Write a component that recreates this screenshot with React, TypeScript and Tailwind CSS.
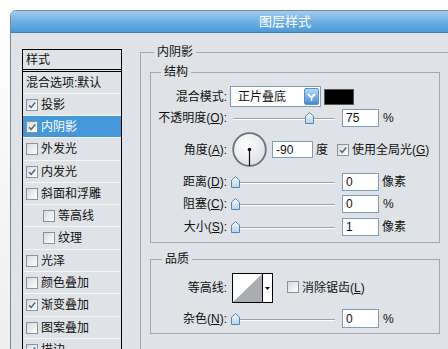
import React from 'react';

const styleItems = [
  { label: '投影', checked: true, h: 'h-[22px]' },
  { label: '内阴影', checked: true, active: true, h: 'h-[22px]' },
  { label: '外发光', checked: false, h: 'h-[23px]' },
  { label: '内发光', checked: true, h: 'h-[22px]' },
  { label: '斜面和浮雕', checked: false, h: 'h-[22px]' },
  { label: '等高线', checked: false, indent: true, h: 'h-[22px]' },
  { label: '纹理', checked: false, indent: true, h: 'h-[23px]' },
  { label: '光泽', checked: false, h: 'h-[22px]' },
  { label: '颜色叠加', checked: false, h: 'h-[22px]' },
  { label: '渐变叠加', checked: true, h: 'h-[23px]' },
  { label: '图案叠加', checked: false, h: 'h-[22px]' },
  { label: '描边', checked: true, h: 'h-[22px]' },
];

const Check = ({ checked }: { checked?: boolean }) => (
  <span className="inline-flex w-[12px] h-[12px] shrink-0 items-center justify-center border border-[#8a929b] bg-gradient-to-br from-[#d6dae0] to-white">
    {checked && (
      <svg width="10" height="10" viewBox="0 0 10 10">
        <path d="M2 5.2 L4.2 7.4 L8.2 2.6" fill="none" stroke="#4a6b90" strokeWidth="1.6" />
      </svg>
    )}
  </span>
);

const Thumb = () => (
  <svg width="9" height="12" viewBox="0 0 9 12">
    <defs>
      <linearGradient id="th" x1="0" y1="0" x2="0" y2="1">
        <stop offset="0" stopColor="#f4f9fd" />
        <stop offset="1" stopColor="#b7d4ef" />
      </linearGradient>
    </defs>
    <path d="M0.5 11.5 V4.2 L4.5 0.6 L8.5 4.2 V11.5 Z" fill="url(#th)" stroke="#5c82a8" />
  </svg>
);

const Slider = ({ thumbLeft }: { thumbLeft: string }) => (
  <div className="relative ml-[3px] w-[106px] h-[12px]">
    <div className="absolute left-[3px] right-[1px] top-[6px] h-[2px] border-t border-[#9da2a8] bg-white" />
    <div className={`absolute top-0 ${thumbLeft}`}>
      <Thumb />
    </div>
  </div>
);

const NumBox = ({ value, h = 'h-[18px]' }: { value: string; h?: string }) => (
  <div className={`ml-[6px] w-[37px] ${h} bg-white border border-[#7f9db9] pl-[3px] flex items-center text-[12px] leading-[14px]`}>
    {value}
  </div>
);

const Label = ({ text, mn }: { text: string; mn?: string }) => (
  <div className="w-[76px] shrink-0 text-right text-[12px] leading-[14px]">
    {text}
    {mn && (
      <>
        (<span className="underline">{mn}</span>)
      </>
    )}
    :
  </div>
);

const App = () => {
  return (
    <div className="w-[448px] h-[349px] overflow-hidden bg-gradient-to-b from-white to-[#eeeeee] text-[#111] font-['Liberation_Sans','Noto_Sans_CJK_SC',sans-serif]">
      <div className="ml-[10px] mt-[10px] w-[550px] h-[400px] border border-[#7b8a9a] rounded-tl-[6px] overflow-hidden bg-[#dfe2e6]">
        {/* Title bar */}
        <div className="h-[22px] border-b border-[#3d7fbd] bg-gradient-to-b from-[#a3cdf0] via-[#6eb0e3] to-[#4b99d8] flex items-center justify-center text-white text-[13px] leading-[14px]">
          图层样式
        </div>

        <div className="flex items-start pl-[11px] pt-[12px]">
          {/* Style list */}
          <div className="mt-[4px] w-[100px] shrink-0 border border-black">
            <div className="h-[20px] border-b border-black flex items-center pl-[3px] text-[12px] leading-[14px]">样式</div>
            <div className="h-[2px] border-b border-black" />
            <div className="h-[21px] flex items-center pl-[3px] text-[12px] leading-[14px]">混合选项:默认</div>
            {styleItems.map((item) => (
              <div
                key={item.label}
                className={`${item.h} border-t border-[#f5f6f8] flex items-center gap-[3px] text-[12px] leading-[14px] ${
                  item.indent ? 'pl-[20px]' : 'pl-[3px]'
                } ${item.active ? 'bg-[#4498da] text-white' : ''}`}
              >
                <Check checked={item.checked} />
                {item.label}
              </div>
            ))}
          </div>

          {/* 内阴影 */}
          <fieldset className="ml-[18px] w-[320px] border border-[#a4a8ae] pb-[30px]">
            <legend className="ml-[13px] px-[3px] text-[12px] leading-[14px]">内阴影</legend>

            {/* 结构 */}
            <fieldset className="mt-[6px] ml-[9px] w-[290px] border border-[#a4a8ae] pt-[7px] pb-[6px]">
              <legend className="ml-[10px] px-[3px] text-[12px] leading-[14px]">结构</legend>

              <div className="flex items-center h-[21px]">
                <Label text="混合模式" />
                <div className="ml-[3px] w-[91px] h-[21px] bg-white border border-[#7f9db9] flex items-center justify-between pl-[7px] pr-[1px] text-[12px] leading-[14px]">
                  正片叠底
                  <div className="w-[15px] h-[17px] rounded-[2px] border border-[#5f8fbf] bg-gradient-to-b from-[#b5d8f5] to-[#3e8cd4] flex items-center justify-center">
                    <svg width="11" height="11" viewBox="0 0 11 11">
                      <path d="M2 3 L5.5 6.5 L9 3" fill="none" stroke="white" strokeWidth="2" />
                      <path d="M5.5 6 V10" stroke="white" strokeWidth="1.5" />
                    </svg>
                  </div>
                </div>
                <div className="ml-[3px] w-[30px] h-[16px] bg-black border border-[#555]" />
              </div>

              <div className="flex items-center h-[18px] mt-[2px]">
                <Label text="不透明度" mn="O" />
                <Slider thumbLeft="left-[75px]" />
                <NumBox value="75" />
                <span className="ml-[4px] text-[12px] leading-[14px]">%</span>
              </div>

              <div className="flex items-center h-[35px] mt-[5px]">
                <Label text="角度" mn="A" />
                <svg className="ml-[5px]" width="35" height="35" viewBox="0 0 35 35">
                  <defs>
                    <radialGradient id="dial" cx="0.4" cy="0.35" r="0.7">
                      <stop offset="0" stopColor="#ffffff" />
                      <stop offset="1" stopColor="#dcdfe4" />
                    </radialGradient>
                  </defs>
                  <circle cx="17.5" cy="17.5" r="16.3" fill="url(#dial)" stroke="#6e7278" strokeWidth="1.8" />
                  <line x1="17.5" y1="17.5" x2="17.5" y2="34" stroke="#111" strokeWidth="1.2" />
                  <circle cx="17.5" cy="17.5" r="1.8" fill="#111" />
                </svg>
                <div className="ml-[5px] w-[41px] h-[17px] bg-white border border-[#7f9db9] pl-[3px] flex items-center text-[12px] leading-[14px]">
                  -90
                </div>
                <span className="ml-[3px] text-[12px] leading-[14px]">度</span>
                <span className="ml-[9px]">
                  <Check checked />
                </span>
                <span className="ml-[3px] text-[12px] leading-[14px]">
                  使用全局光(<span className="underline">G</span>)
                </span>
              </div>

              <div className="flex items-center h-[18px] mt-[6px]">
                <Label text="距离" mn="D" />
                <Slider thumbLeft="left-[1px]" />
                <NumBox value="0" />
                <span className="ml-[3px] text-[12px] leading-[14px]">像素</span>
              </div>

              <div className="flex items-center h-[18px] mt-[4px]">
                <Label text="阻塞" mn="C" />
                <Slider thumbLeft="left-[1px]" />
                <NumBox value="0" />
                <span className="ml-[4px] text-[12px] leading-[14px]">%</span>
              </div>

              <div className="flex items-center h-[18px] mt-[5px]">
                <Label text="大小" mn="S" />
                <Slider thumbLeft="left-[1px]" />
                <NumBox value="1" />
                <span className="ml-[3px] text-[12px] leading-[14px]">像素</span>
              </div>
            </fieldset>

            {/* 品质 */}
            <fieldset className="mt-[9px] ml-[9px] w-[290px] border border-[#a4a8ae] pt-[7px] pb-[5px]">
              <legend className="ml-[11px] px-[3px] text-[12px] leading-[14px]">品质</legend>

              <div className="flex items-center h-[30px]">
                <Label text="等高线" />
                <div className="ml-[5px] w-[41px] h-[30px] border border-black bg-white flex">
                  <svg width="29" height="28" viewBox="0 0 29 28">
                    <polygon points="0,28 29,0 29,28" fill="#a9acb1" />
                  </svg>
                  <div className="flex-1 border-l border-black flex items-center justify-center">
                    <svg width="5" height="3" viewBox="0 0 5 3">
                      <polygon points="0,0 5,0 2.5,3" fill="#111" />
                    </svg>
                  </div>
                </div>
                <span className="ml-[14px]">
                  <Check />
                </span>
                <span className="ml-[3px] text-[12px] leading-[14px]">
                  消除锯齿(<span className="underline">L</span>)
                </span>
              </div>

              <div className="flex items-center h-[19px] mt-[6px]">
                <Label text="杂色" mn="N" />
                <Slider thumbLeft="left-[1px]" />
                <NumBox value="0" h="h-[19px]" />
                <span className="ml-[4px] text-[12px] leading-[14px]">%</span>
              </div>
            </fieldset>
          </fieldset>
        </div>
      </div>
    </div>
  );
};

export default App;
